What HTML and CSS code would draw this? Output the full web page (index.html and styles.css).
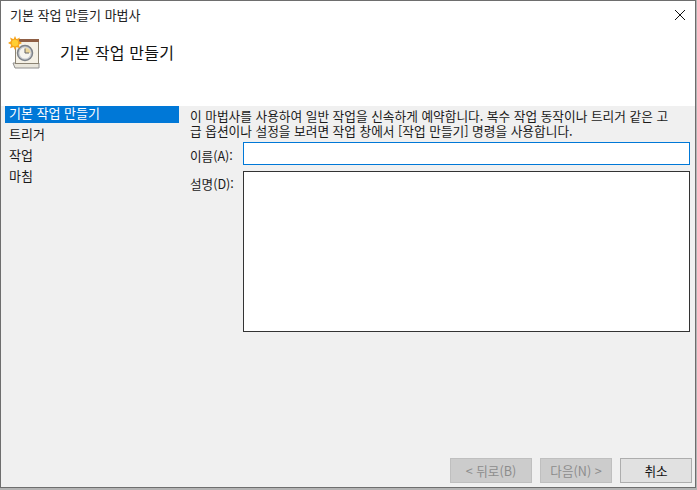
FILE: index.html
```html
<!DOCTYPE html>
<html lang="ko">
<head>
<meta charset="utf-8">
<title>기본 작업 만들기 마법사</title>
<link rel="stylesheet" href="styles.css">
</head>
<body>
<div class="window">
  <div class="titlebar">
    <span class="title">기본 작업 만들기 마법사</span>
    <svg class="close" width="12" height="12" viewBox="0 0 12 12"><path d="M1 1L11 11M11 1L1 11" stroke="#111" stroke-width="1" fill="none"/></svg>
  </div>
  <div class="header">
    <svg class="task-icon" width="32" height="33" viewBox="0 0 32 33">
      <path d="M5 27h26v5H7z" fill="#e9e6dc" stroke="#8f8f8f" stroke-width="1"/>
      <rect x="7.500" y="3.500" width="23" height="24" fill="#f5f1e6" stroke="#8c8474"/>
      <rect x="11" y="3" width="20" height="3" fill="#8f5f45"/>
      <circle cx="17" cy="17" r="7.500" fill="#c8cbd0" stroke="#7d8288" stroke-width="1.500"/>
      <circle cx="17" cy="17" r="5.500" fill="#f7f5ee"/>
      <path d="M17 11.500a5.500 5.500 0 0 1 5.500 5.500H17z" fill="#ecd79b"/>
      <path d="M17 12.500V17h4" stroke="#666" fill="none"/>
      <path d="M7 0l1.500 3.300 3.400-1.700-1.100 3.500L14 7l-3.200 1.700 1.100 3.500-3.400-1.300L7 14l-1.500-3.100-3.400 1.300 1.100-3.500L0 7l3.200-1.900-1.100-3.500 3.400 1.700z" fill="#f6a41c"/>
      <circle cx="7" cy="7" r="3.200" fill="#ffcf33"/>
    </svg>
    <span class="heading">기본 작업 만들기</span>
  </div>
  <div class="main">
    <div class="panes">
      <nav class="steps">
        <div class="step active">기본 작업 만들기</div>
        <div class="step">트리거</div>
        <div class="step">작업</div>
        <div class="step">마침</div>
      </nav>
      <section class="content">
        <p class="intro">이 마법사를 사용하여 일반 작업을 신속하게 예약합니다. 복수 작업 동작이나 트리거 같은 고<br>급 옵션이나 설정을 보려면 작업 창에서 [작업 만들기] 명령을 사용합니다.</p>
        <div class="field">
          <label class="label">이름(A):</label>
          <div class="input focused"></div>
        </div>
        <div class="field desc">
          <label class="label">설명(D):</label>
          <div class="input area"></div>
        </div>
      </section>
    </div>
    <div class="footer">
      <button class="btn back" disabled>&lt; 뒤로(B)</button>
      <button class="btn next" disabled>다음(N) &gt;</button>
      <button class="btn cancel">취소</button>
    </div>
  </div>
</div>
</body>
</html>
```
FILE: styles.css
```css
html, body { margin: 0; padding: 0; background: #b4b4b4; }
body { width: 697px; height: 490px; overflow: hidden; font-family: "Noto Sans CJK KR", "Liberation Sans", sans-serif; font-size: 13px; color: #1a1a1a; }
.window { box-sizing: border-box; width: 696px; height: 488px; border: 1px solid #6e6e6e; display: flex; flex-direction: column; background: #fff; }
.titlebar { height: 29px; display: flex; align-items: center; justify-content: space-between; padding: 0 9px 2px 9px; box-sizing: border-box; flex: none; }
.title { font-size: 13px; line-height: 20px; color: #222; }
.header { height: 76px; flex: none; display: flex; align-items: flex-start; padding-left: 7px; }
.task-icon { flex: none; margin-top: 6px; }
.heading { font-size: 16px; letter-spacing: 0.250px; line-height: 22px; margin: 11px 0 0 20px; color: #111; }
.main { flex: 1; display: flex; flex-direction: column; background: #f0f0f0; }
.panes { flex: 1; display: flex; }
.steps { width: 178px; flex: none; padding: 0 0 0 4px; box-sizing: border-box; }
.step { height: 21px; line-height: 20px; padding-left: 4px; }
.step.active { height: 17px; line-height: 13px; width: 174px; padding-left: 4px; margin-bottom: 1px; background: #0078d7; color: #fff; box-sizing: border-box; }
.content { flex: 1; padding: 2px 5px 0 11px; }
.intro { margin: 0; font-size: 12.700px; line-height: 15px; white-space: nowrap; }
.field { display: flex; margin-top: 4px; }
.label { width: 53px; height: 23px; flex: none; font-size: 12.600px; line-height: 27px; }
.desc { margin-top: 6px; }
.desc .label { line-height: 26px; }
.input { box-sizing: border-box; flex: 1; height: 23px; border: 1px solid #0078d7; background: #fff; }
.input.area { height: 161px; border-color: #333; }
.footer { height: 29px; flex: none; display: flex; justify-content: flex-end; gap: 8px; padding-right: 3px; box-sizing: border-box; }
.btn { box-sizing: border-box; font: inherit; font-size: 12.600px; width: 72px; height: 25px; padding: 0; border: 1px solid #adadad; background: #e1e1e1; color: #111; }
.btn.back { width: 82px; }
.btn[disabled] { background: #cccccc; border-color: #bfbfbf; color: #8c8c8c; }
```
